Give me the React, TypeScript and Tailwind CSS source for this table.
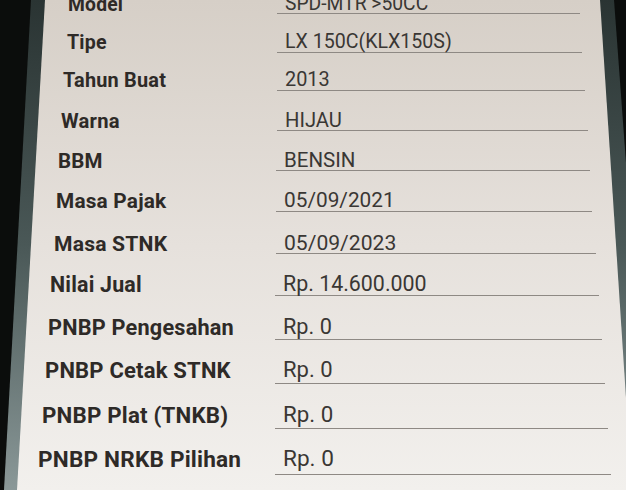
import React from "react";

type Row = {
  label: string;
  value: string;
  h: string;
  fs: string;
  pl: string;
  lw: string;
  vw: string;
  pb: string;
};

const rows: Row[] = [
  { label: "Model", value: "SPD-MTR >50CC", h: "h-[40px]", fs: "text-[19.3px]", pl: "pl-[68px]", lw: "w-[277px]", vw: "w-[303px]", pb: "pb-0" },
  { label: "Tipe", value: "LX 150C(KLX150S)", h: "h-[39px]", fs: "text-[19.6px]", pl: "pl-[67px]", lw: "w-[277px]", vw: "w-[305px]", pb: "pb-0" },
  { label: "Tahun Buat", value: "2013", h: "h-[38px]", fs: "text-[19.9px]", pl: "pl-[63px]", lw: "w-[277px]", vw: "w-[308px]", pb: "pb-0" },
  { label: "Warna", value: "HIJAU", h: "h-[40px]", fs: "text-[20.2px]", pl: "pl-[61px]", lw: "w-[277px]", vw: "w-[311px]", pb: "pb-0" },
  { label: "BBM", value: "BENSIN", h: "h-[40px]", fs: "text-[20.5px]", pl: "pl-[58px]", lw: "w-[276px]", vw: "w-[314px]", pb: "pb-0" },
  { label: "Masa Pajak", value: "05/09/2021", h: "h-[41px]", fs: "text-[20.8px]", pl: "pl-[56px]", lw: "w-[276px]", vw: "w-[316px]", pb: "pb-0" },
  { label: "Masa STNK", value: "05/09/2023", h: "h-[42px]", fs: "text-[21.1px]", pl: "pl-[54px]", lw: "w-[276px]", vw: "w-[320px]", pb: "pb-0" },
  { label: "Nilai Jual", value: "Rp. 14.600.000", h: "h-[42px]", fs: "text-[21.4px]", pl: "pl-[50px]", lw: "w-[275px]", vw: "w-[324px]", pb: "pb-[0.5px]" },
  { label: "PNBP Pengesahan", value: "Rp. 0", h: "h-[44px]", fs: "text-[21.7px]", pl: "pl-[48px]", lw: "w-[275px]", vw: "w-[327px]", pb: "pb-[1.5px]" },
  { label: "PNBP Cetak STNK", value: "Rp. 0", h: "h-[44px]", fs: "text-[22px]", pl: "pl-[45px]", lw: "w-[275px]", vw: "w-[330px]", pb: "pb-[2px]" },
  { label: "PNBP Plat (TNKB)", value: "Rp. 0", h: "h-[45px]", fs: "text-[22.3px]", pl: "pl-[42px]", lw: "w-[275px]", vw: "w-[333px]", pb: "pb-[2.5px]" },
  { label: "PNBP NRKB Pilihan", value: "Rp. 0", h: "h-[46px]", fs: "text-[22.6px]", pl: "pl-[38px]", lw: "w-[275px]", vw: "w-[336px]", pb: "pb-[3px]" },
];

export default function App() {
  return (
    <div className="w-[626px] h-[490px] overflow-hidden bg-[#0b0d0c] font-['Roboto','Noto_Sans',sans-serif] flex flex-col">
      <div className="w-full h-full flex flex-col bg-gradient-to-b from-[#2a3433] via-[#4a5857] to-[#8a9898] [clip-path:polygon(31px_0,614px_0,650px_490px,4px_490px)]">
        <div className="w-full h-full flex flex-col overflow-hidden bg-gradient-to-b from-[#d6cfc7] via-[#e6e1dc] to-[#f2f0ed] [clip-path:polygon(45px_0,600px_0,632px_490px,17px_490px)]">
          <div className="flex flex-col -mt-[26px] shrink-0">
            {rows.map((r) => (
              <div key={r.label} className={`flex items-end shrink-0 ${r.h} ${r.fs}`}>
                <div className={`${r.lw} ${r.pl} ${r.pb} shrink-0 leading-none font-bold tracking-[0.2px] text-[#2e2a27] whitespace-nowrap`}>
                  {r.label}
                </div>
                <div className={`${r.vw} ${r.pb} shrink-0 leading-none pl-[8px] text-[#3a3734] border-b-[1.5px] border-[#8e8984] whitespace-nowrap`}>
                  {r.value}
                </div>
              </div>
            ))}
          </div>
        </div>
      </div>
    </div>
  );
}
